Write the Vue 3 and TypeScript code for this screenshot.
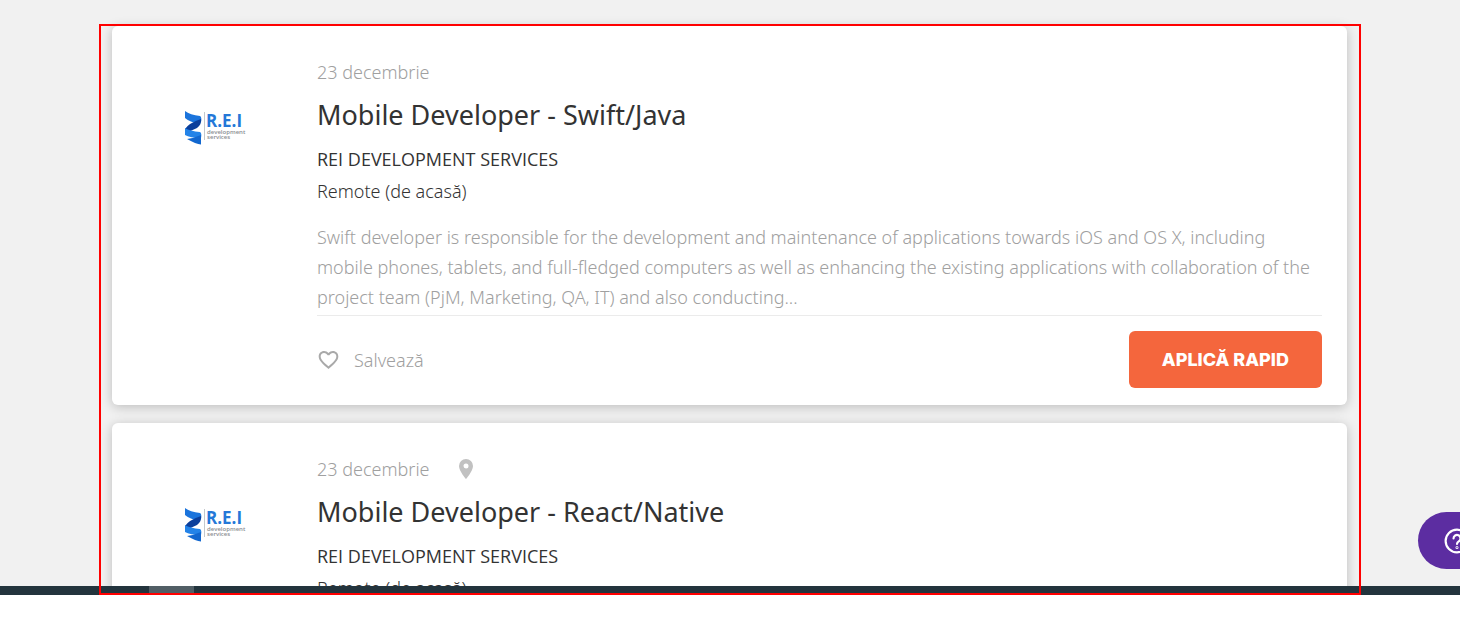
<script setup lang="ts">
interface Job {
  id: number
  date: string
  title: string
  company: string
  location: string
  description: string
  pinned: boolean
}

const description =
  'Swift developer is responsible for the development and maintenance of applications towards iOS and OS X, including mobile phones, tablets, and full-fledged computers as well as enhancing the existing applications with collaboration of the project team (PjM, Marketing, QA, IT) and also conducting...'

const jobs: Job[] = [
  { id: 1, date: '23 decembrie', title: 'Mobile Developer - Swift/Java', company: 'REI DEVELOPMENT SERVICES', location: 'Remote (de acasă)', description, pinned: false },
  { id: 2, date: '23 decembrie', title: 'Mobile Developer - React/Native', company: 'REI DEVELOPMENT SERVICES', location: 'Remote (de acasă)', description, pinned: true },
]
</script>

<template>
  <div class="screen">
    <main class="page">
      <article v-for="job in jobs" :key="job.id" class="card">
        <div class="brand">
          <svg class="logo" viewBox="0 0 62 36" role="img" aria-label="R.E.I development services">
            <path d="M1 1 Q6 5 16 6 Q18 7 17 12 L15 14 Q6 12 1 8Z" fill="#1b74dc" />
            <path d="M17 9 Q18 14 13 18 Q7 20 1 25 V19 Q5 13 17 9Z" fill="#0b3f9c" />
            <path d="M1 18 Q6 21 16 22 Q18 23 17 28 Q6 28 1 25Z" fill="#2383e8" />
            <path d="M17 25 V34.500 Q12 34 3 29 Q10 28 17 25Z" fill="#1267cf" />
            <path d="M20.500 2V30" stroke="#c4c8cc" stroke-width="1" />
            <text x="22" y="17" class="logo-name">R.E.I</text>
            <text x="23" y="24" class="logo-sub">development</text>
            <text x="23" y="29" class="logo-sub">services</text>
          </svg>
        </div>
        <div class="body">
          <div class="meta">
            <span>{{ job.date }}</span>
            <svg v-if="job.pinned" class="pin" viewBox="0 0 14 20" aria-hidden="true">
              <path fill-rule="evenodd" d="M7 0a7 7 0 0 0-7 7c0 5 7 13 7 13s7-8 7-13a7 7 0 0 0-7-7zm0 4.500a2.500 2.500 0 1 1 0 5 2.500 2.500 0 0 1 0-5z" fill="#c1c1c1" />
            </svg>
          </div>
          <h2 class="title">{{ job.title }}</h2>
          <p class="company">{{ job.company }}</p>
          <p class="location">{{ job.location }}</p>
          <p class="description">{{ job.description }}</p>
          <div class="actions">
            <button type="button" class="save">
              <svg class="heart" viewBox="2 3 20 18.350" aria-hidden="true">
                <path fill="#a9a9a9" d="M16.500 3c-1.740 0-3.410.81-4.500 2.090C10.910 3.810 9.240 3 7.500 3 4.420 3 2 5.420 2 8.500c0 3.780 3.400 6.860 8.550 11.540L12 21.350l1.450-1.320C18.600 15.360 22 12.280 22 8.500 22 5.420 19.580 3 16.500 3zm-4.400 15.550l-.1.100-.1-.1C7.140 14.240 4 11.390 4 8.500 4 6.500 5.500 5 7.500 5c1.540 0 3.040.99 3.570 2.360h1.870C13.460 5.990 14.960 5 16.500 5c2 0 3.500 1.500 3.500 3.500 0 2.890-3.140 5.740-7.900 10.050z" />
              </svg>
              <span>Salvează</span>
            </button>
            <button type="button" class="apply">APLICĂ RAPID</button>
          </div>
        </div>
      </article>
    </main>
    <footer class="taskbar"><span class="task"></span></footer>
    <button type="button" class="help" aria-label="Ajutor">
      <svg viewBox="0 0 24 24" width="26" height="26" fill="none" stroke="#fff" stroke-width="2" stroke-linecap="round">
        <circle cx="12" cy="12" r="10.500" />
        <path d="M8.800 9.600a3.200 3.200 0 1 1 5.200 2.500c-1.300 1-2 1.500-2 2.700" />
        <circle cx="12" cy="18" r=".4" />
      </svg>
    </button>
    <div class="frame"></div>
  </div>
</template>

<style>
body {
  margin: 0;
  background: #fff;
}
</style>

<style scoped>
.screen {
  position: relative;
  box-sizing: border-box;
  height: 100vh;
  padding-bottom: 25px;
  display: grid;
  grid-template-rows: minmax(0, 1fr) 9px;
  overflow: hidden;
  background: #fff;
  font-family: "Noto Sans", "Open Sans", sans-serif;
  font-size: 18px;
  font-weight: 300;
  color: #333;
}
.page {
  display: flex;
  flex-direction: column;
  gap: 18px;
  padding: 26px 113px 0 112px;
  overflow: hidden;
  background: #f1f1f1;
}
.card {
  flex: none;
  display: grid;
  grid-template-columns: 205px minmax(0, 1fr);
  padding: 31px 25px 17px 0;
  border-radius: 6px;
  background: #fff;
  box-shadow: 0 2px 12px rgba(0, 0, 0, 0.22);
}
.brand {
  padding-top: 53px;
  text-align: center;
}
.logo {
  width: 62px;
  height: 36px;
}
.logo-name {
  font: 700 17px "Open Sans", sans-serif;
  fill: #2478d8;
}
.logo-sub {
  font: 600 6px "Open Sans", sans-serif;
  fill: #8a8d92;
}
.meta {
  display: flex;
  align-items: center;
  gap: 29px;
  line-height: 30px;
  color: #a0a0a0;
}
.pin {
  width: 14px;
  height: 20px;
}
h2,
p {
  margin: 0;
}
.title {
  margin: 10px 0;
  font-size: 27px;
  line-height: 36px;
  font-weight: 400;
}
.company {
  font-family: "Open Sans", sans-serif;
  line-height: 32px;
  font-weight: 400;
}
.location {
  line-height: 32px;
}
.description {
  margin-top: 15px;
  padding-bottom: 3px;
  line-height: 30px;
  color: #a0a0a0;
}
.actions {
  display: flex;
  align-items: center;
  justify-content: space-between;
  padding-top: 15px;
  border-top: 1px solid #ebebeb;
}
button {
  border: 0;
  font: inherit;
  cursor: pointer;
}
.save {
  display: flex;
  align-items: center;
  gap: 15px;
  padding: 0 0 0 1px;
  background: none;
  color: #a0a0a0;
}
.heart {
  width: 21px;
  height: 18px;
}
.apply {
  padding: 0 33px;
  border-radius: 6px;
  background: #f4663d;
  color: #fff;
  font-family: Inter, sans-serif;
  font-size: 18px;
  font-weight: 800;
  line-height: 57px;
}
.taskbar {
  display: flex;
  padding-left: 149px;
  background: #23343d;
}
.task {
  width: 45px;
  background: #515e65;
}
.help {
  position: absolute;
  right: 0;
  bottom: 51px;
  display: flex;
  align-items: center;
  width: 42px;
  height: 57px;
  padding: 0 0 0 26px;
  overflow: hidden;
  border-radius: 29px 0 0 29px;
  background: #5c2da1;
}
.help svg {
  flex: none;
}
.frame {
  position: absolute;
  inset: 24px 99px 25px;
  border: 2px solid #f00;
  pointer-events: none;
}
</style>
